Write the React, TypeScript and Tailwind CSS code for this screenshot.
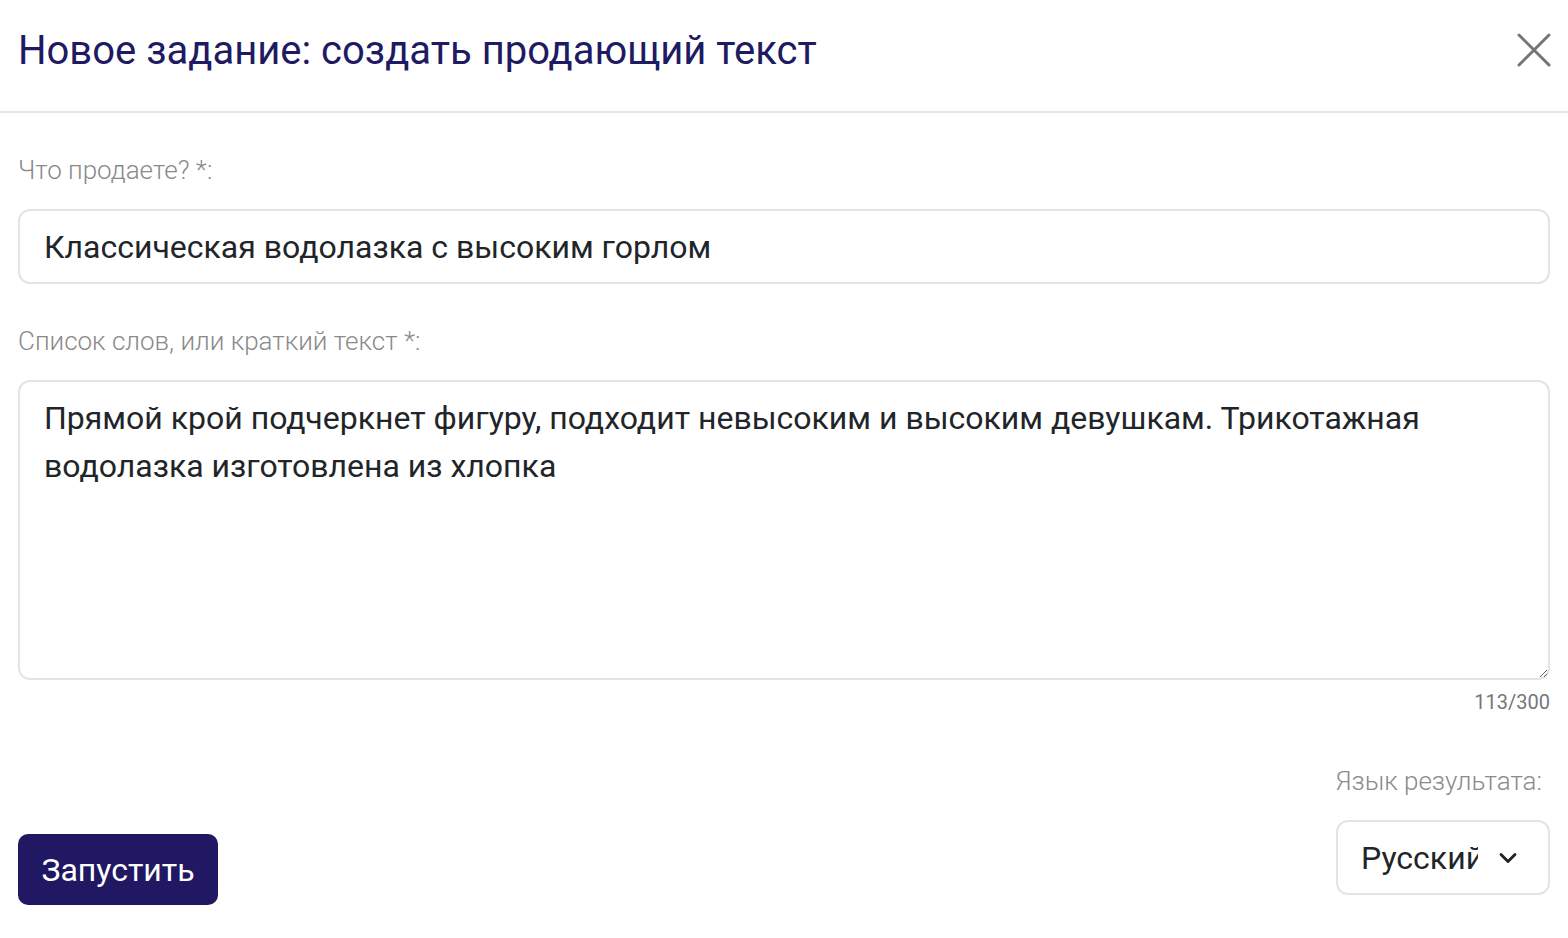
import { ChevronDown } from 'lucide-react'

const FONT = { fontFamily: 'Roboto, "Noto Sans", Arial, sans-serif' }

export default function App() {
  return (
    <div className="min-h-screen bg-white" style={FONT}>
      {/* Header */}
      <div className="h-[113px] flex items-start justify-between pl-[18px] pr-[16px] pt-[28px] border-b-2 border-[#e3e5e8]">
        <h1 className="text-[40px] leading-[46px] text-[#201a63]">
          Новое задание: создать продающий текст
        </h1>
        <button className="w-[36px] h-[36px] mt-[4px] flex items-center justify-center text-[#757575]">
          <svg width="34" height="34" viewBox="0 0 34 34" fill="none" stroke="currentColor" strokeWidth="3" strokeLinecap="round">
            <path d="M2 2 L32 32 M32 2 L2 32" />
          </svg>
        </button>
      </div>

      {/* Body */}
      <div className="px-[18px] pt-[42px]">
        <label className="block text-[26px] leading-[30px] font-light text-[#8a8a8a]">Что продаете? *:</label>
        <input
          className="mt-[24px] w-full h-[75px] rounded-[12px] border-2 border-[#e1e4e8] px-[24px] text-[32px] text-[#212529] outline-none"
          defaultValue="Классическая водолазка с высоким горлом"
        />

        <label className="block mt-[42px] text-[26px] leading-[30px] font-light text-[#8a8a8a]">
          Список слов, или краткий текст *:
        </label>
        <textarea
          className="mt-[24px] block w-full h-[300px] rounded-[12px] border-2 border-[#e1e4e8] px-[24px] pt-[12px] text-[32px] leading-[48px] text-[#212529] outline-none"
          defaultValue="Прямой крой подчеркнет фигуру, подходит невысоким и высоким девушкам. Трикотажная водолазка изготовлена из хлопка"
        />
        <div className="mt-[10px] text-right text-[20px] leading-[24px] text-[#777777]">113/300</div>

        {/* Bottom row */}
        <div className="flex items-end justify-between mt-[52px]">
          <button className="h-[71px] w-[200px] rounded-[10px] bg-[#201862] text-white text-[32px]">Запустить</button>
          <div className="flex flex-col items-end mb-[10px]">
            <span className="text-[26px] leading-[30px] font-light text-[#8a8a8a] pr-[8px]">Язык результата:</span>
            <div className="mt-[24px] w-[214px] h-[75px] rounded-[12px] border-2 border-[#e1e4e8] flex items-center pl-[23px] pr-[26px]">
              <span className="w-[117px] overflow-hidden whitespace-nowrap text-[32px] text-[#212529]">Русский</span>
              <ChevronDown className="ml-auto text-[#212529]" size={28} strokeWidth={2.5} />
            </div>
          </div>
        </div>
      </div>
    </div>
  )
}
